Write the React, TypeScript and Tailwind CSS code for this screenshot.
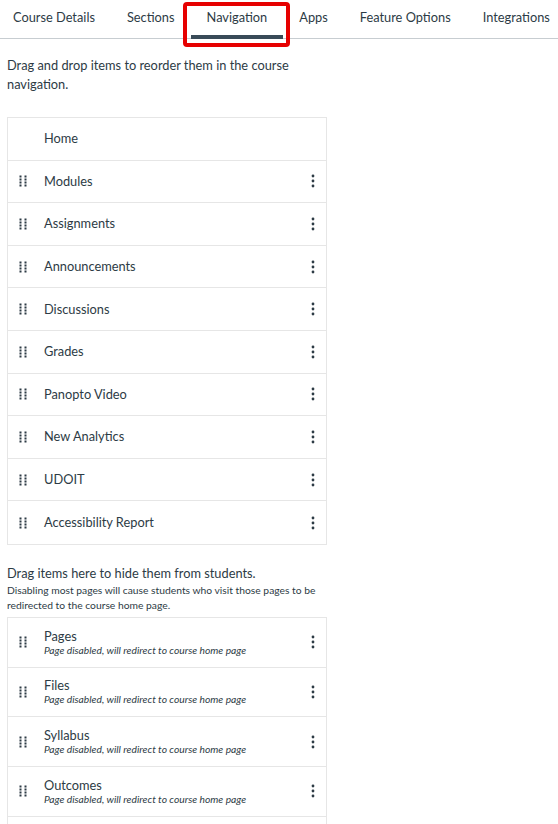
import React from "react";

const enabled = [
  "Modules",
  "Assignments",
  "Announcements",
  "Discussions",
  "Grades",
  "Panopto Video",
  "New Analytics",
  "UDOIT",
  "Accessibility Report",
];

const hidden = ["Pages", "Files", "Syllabus", "Outcomes"];

const tabs = ["Course Details", "Sections", "Navigation", "Apps", "Feature Options", "Integrations"];

function Handle() {
  return (
    <svg width="8" height="12" viewBox="0 0 8 12" className="shrink-0">
      {[0, 1, 2, 3].map((r) =>
        [0, 1].map((c) => (
          <rect key={`${r}-${c}`} x={c * 5 + 0.5} y={r * 3 + 0.5} width="2" height="2" fill="#2d3b45" />
        ))
      )}
    </svg>
  );
}

function Kebab() {
  return (
    <svg width="4" height="14" viewBox="0 0 4 14" className="shrink-0">
      <circle cx="2" cy="2" r="1.4" fill="#2d3b45" />
      <circle cx="2" cy="7" r="1.4" fill="#2d3b45" />
      <circle cx="2" cy="12" r="1.4" fill="#2d3b45" />
    </svg>
  );
}

export default function App() {
  return (
    <div
      className="w-[558px] h-[824px] overflow-hidden bg-white text-[#2d3b45]"
      style={{ fontFamily: "Lato, 'Noto Sans', sans-serif" }}
    >
      <div className="relative flex h-[39px] border-b border-[#c7cdd1] ml-[-3px]">
        {tabs.map((t) => (
          <div key={t} className="relative px-4 flex items-center text-[12.8px] whitespace-nowrap h-full">
            <span className="mt-[-2px]">{t}</span>
            {t === "Navigation" && (
              <>
                <div className="absolute left-0 right-0 bottom-[-1px] h-[4px] bg-[#394b58]" />
                <div className="absolute left-[-8px] right-[-7px] top-[2px] h-[45px] border-[4px] border-[#e60000] rounded-[4px]" />
              </>
            )}
          </div>
        ))}
      </div>

      <div className="px-[7px]">
        <p className="mt-[17px] w-[320px] text-[12.8px] leading-[19px]">
          Drag and drop items to reorder them in the course navigation.
        </p>

        <div className="mt-[23px] w-[320px] border border-[#e6e6e6]">
          <div className="h-[42.6px] flex items-center pl-[36px] text-[12.8px] border-b border-[#e6e6e6]">
            Home
          </div>
          {enabled.map((n, i) => (
            <div
              key={n}
              className={`h-[42.6px] flex items-center pl-[11px] pr-[11px] text-[12.8px] ${
                i < enabled.length - 1 ? "border-b border-[#e6e6e6]" : ""
              }`}
            >
              <Handle />
              <span className="ml-[17px] flex-1">{n}</span>
              <Kebab />
            </div>
          ))}
        </div>

        <p className="mt-[18px] text-[12.8px] leading-[20px]">Drag items here to hide them from students.</p>
        <p className="w-[320px] text-[10.3px] leading-[15px]">
          Disabling most pages will cause students who visit those pages to be redirected to the course home page.
        </p>

        <div className="mt-[4px] w-[320px] border border-[#e6e6e6]">
          {hidden.map((n) => (
            <div
              key={n}
              className="h-[49.7px] flex items-center pl-[11px] pr-[11px] border-b border-[#e6e6e6]"
            >
              <Handle />
              <div className="ml-[17px] flex-1 flex flex-col">
                <span className="text-[12.8px] leading-[16px]">{n}</span>
                <span className="text-[10.25px] leading-[13px] italic">Page disabled, will redirect to course home page</span>
              </div>
              <Kebab />
            </div>
          ))}
          <div className="h-[49.7px]" />
        </div>
      </div>
    </div>
  );
}
